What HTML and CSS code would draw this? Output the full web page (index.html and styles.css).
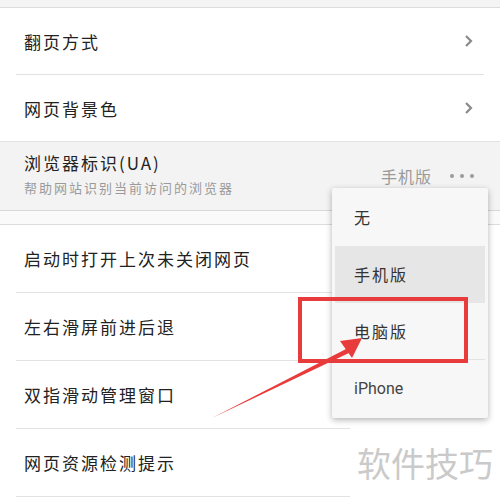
FILE: index.html
```html
<!DOCTYPE html>
<html lang="zh-CN">
<head>
    <meta charset="UTF-8">
    <meta name="viewport" content="width=device-width, initial-scale=1.0">
    <title>设置</title>
    <link rel="stylesheet" href="styles.css">
</head>
<body>
<div id="page">
    <div class="topbar"></div>
    <div class="group">
        <div class="row">
            <span class="label">翻页方式</span>
            <svg class="chev" width="10" height="14" viewBox="0 0 10 14"><path d="M2 2 L7 7 L2 12" fill="none" stroke="#8a8a8a" stroke-width="2.2"/></svg>
        </div>
        <div class="row last">
            <span class="label">网页背景色</span>
            <svg class="chev" width="10" height="14" viewBox="0 0 10 14"><path d="M2 2 L7 7 L2 12" fill="none" stroke="#8a8a8a" stroke-width="2.2"/></svg>
        </div>
    </div>
    <div class="ua">
        <div class="uaText">
            <div class="label">浏览器标识(UA)</div>
            <div class="sub">帮助网站识别当前访问的浏览器</div>
        </div>
        <span class="value">手机版</span>
        <span class="dots"><i></i><i></i><i></i></span>
    </div>
    <div class="gap"></div>
    <div class="group lower">
        <div class="row"><span class="label">启动时打开上次未关闭网页</span></div>
        <div class="row"><span class="label">左右滑屏前进后退</span></div>
        <div class="row"><span class="label">双指滑动管理窗口</span></div>
        <div class="row"><span class="label">网页资源检测提示</span></div>
    </div>

    <div class="menu">
        <div class="item">无</div>
        <div class="item on">手机版</div>
        <div class="item line">电脑版</div>
        <div class="item latin">iPhone</div>
    </div>

    <div class="mark">软件技巧</div>
    <div class="redbox"></div>
    <svg class="arrow" width="500" height="500" viewBox="0 0 500 500">
        <path d="M212 418 L348 348 L351 352 Z" fill="#e83b3b"/>
        <path d="M362 338 L340 341 L352 358 Z" fill="#e83b3b"/>
    </svg>
</div>
</body>
</html>
```

FILE: styles.css
```css
body {
    margin: 0;
    background: #fff;
    font-family: "Noto Sans CJK SC", "Noto Sans", sans-serif;
    color: #222;
}
#page {
    position: relative;
    width: 500px;
    height: 500px;
    overflow: hidden;
}
.topbar {
    height: 7px;
    background: #f4f4f4;
    border-bottom: 1px solid #dcdcdc;
}
.row {
    display: flex;
    align-items: center;
    justify-content: space-between;
    height: 66px;
    margin: 0 16px;
    padding: 0 10px 0 8px;
    border-bottom: 1px solid #e2e2e2;
}
.row.last {
    border-bottom: none;
}
.lower .row {
    height: 67px;
}
.label {
    font-size: 17px;
    letter-spacing: 2px;
}
.ua {
    display: flex;
    align-items: center;
    height: 68px;
    padding: 0 26px 0 24px;
    background: #f3f3f3;
    border-top: 1px solid #e2e2e2;
    border-bottom: 1px solid #d8d8d8;
}
.uaText {
    flex: 1;
}
.uaText .label {
    line-height: 24px;
    margin-top: -4px;
}
.sub {
    font-size: 13px;
    letter-spacing: 2px;
    color: #9a9a9a;
    margin-top: 3px;
}
.value {
    font-size: 16px;
    letter-spacing: 1px;
    color: #9a9a9a;
}
.dots {
    display: flex;
    gap: 6px;
    margin-left: 18px;
}
.dots i {
    width: 4px;
    height: 4px;
    border-radius: 50%;
    background: #9a9a9a;
}
.gap {
    height: 13px;
    background: #fafafa;
    border-bottom: 1px solid #dcdcdc;
}
.menu {
    position: absolute;
    left: 332px;
    top: 188px;
    width: 156px;
    padding: 1px 3px;
    box-sizing: border-box;
    background: #f7f7f7;
    border-radius: 2px;
    box-shadow: 0 2px 6px rgba(0, 0, 0, 0.3);
}
.item {
    height: 57px;
    line-height: 57px;
    padding-left: 19px;
    font-size: 16px;
    letter-spacing: 2px;
    color: #333;
}
.item.on {
    background: #e6e6e6;
}
.item.line {
    border-bottom: 1px solid #e2e2e2;
    height: 56px;
}
.item.latin {
    font-family: "Roboto", "Noto Sans", sans-serif;
    letter-spacing: 0;
    color: #444;
}
.mark {
    position: absolute;
    left: 350px;
    top: 428px;
    width: 150px;
    height: 72px;
    background: rgba(255, 255, 255, 0.95);
    color: #cacaca;
    font-size: 34px;
    line-height: 70px;
    text-align: center;
}
.redbox {
    position: absolute;
    left: 298px;
    top: 297px;
    width: 162px;
    height: 58px;
    border: 4px solid #e83b3b;
}
.arrow {
    position: absolute;
    left: 0;
    top: 0;
}
```
